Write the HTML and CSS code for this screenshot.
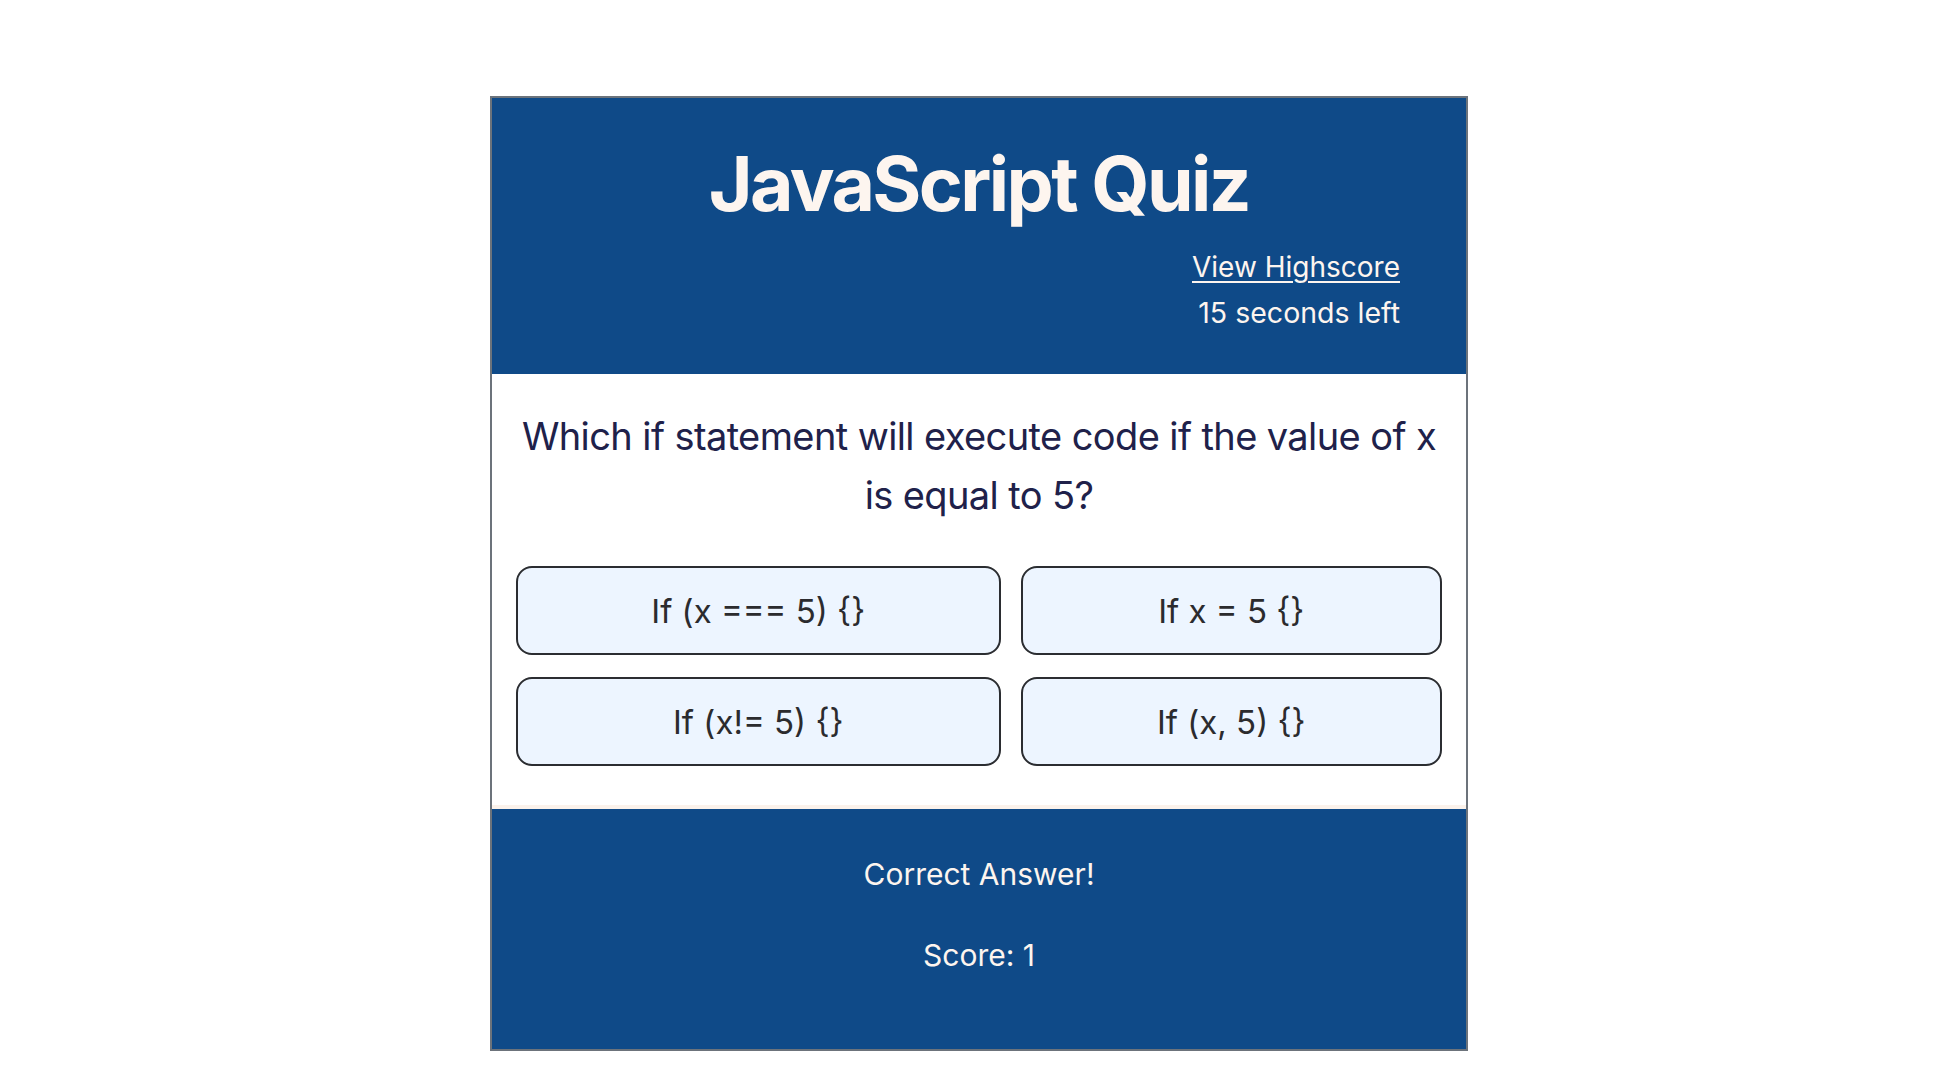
FILE: index.html
```html
<!DOCTYPE html>
<html lang="en">
<head>
<meta charset="utf-8">
<title>JavaScript Quiz</title>
<link rel="stylesheet" href="styles.css">
</head>
<body>
<div class="page">
  <div class="card">
    <header class="header">
      <h1 class="title">JavaScript Quiz</h1>
      <div class="meta">
        <a class="highscore" href="#">View Highscore</a>
        <div class="timer">15 seconds left</div>
      </div>
    </header>
    <main class="quiz">
      <p class="question">Which if statement will execute code if the value of x is equal to 5?</p>
      <div class="answers">
        <button class="answer">If (x === 5) {}</button>
        <button class="answer">If x = 5 {}</button>
        <button class="answer">If (x!= 5) {}</button>
        <button class="answer">If (x, 5) {}</button>
      </div>
    </main>
    <footer class="footer">
      <div class="result">Correct Answer!</div>
      <div class="score">Score: 1</div>
    </footer>
  </div>
</div>
</body>
</html>
```
FILE: styles.css
```css
* { box-sizing: border-box; }
html, body { margin: 0; padding: 0; background: #ffffff; }
body { font-family: Inter, "Noto Sans", "Liberation Sans", sans-serif; }
.page {
  display: flex;
  justify-content: center;
  padding: 96px 0 0 2px;
}
.card {
  width: 978px;
  border: 2px solid #6c737b;
  display: flex;
  flex-direction: column;
}
.header {
  background: #0f4a88;
  color: #fdf5ef;
  padding: 38px 24px 38px 24px;
}
.title {
  margin: 0;
  text-align: center;
  font-size: 75px;
  line-height: 96px;
  font-weight: 700;
  letter-spacing: -2.6px;
}
.meta {
  margin-top: 12px;
  padding-right: 42px;
  display: flex;
  flex-direction: column;
  align-items: flex-end;
  font-size: 28px;
  line-height: 46px;
}
.highscore {
  color: #fdf5ef;
  text-decoration: underline;
  text-underline-offset: 4px;
  text-decoration-thickness: 2px;
}
.timer { color: #fdf5ef; font-size: 28.5px; }
.quiz {
  background: #ffffff;
  padding: 33px 24px 39px 24px;
}
.question {
  margin: 0 -4px;
  text-align: center;
  color: #20214a;
  font-size: 38px;
  line-height: 59px;
  letter-spacing: -0.6px;
}
.answers {
  margin-top: 41px;
  display: grid;
  grid-template-columns: 484fr 421fr;
  column-gap: 20px;
  row-gap: 22px;
}
.answer {
  height: 89px;
  background: #edf5ff;
  border: 2px solid #2b2d31;
  border-radius: 16px;
  font-family: Inter, "Noto Sans", "Liberation Sans", sans-serif;
  font-size: 33px;
  color: #2b2b2e;
  text-align: center;
  padding: 0;
}
.footer {
  background: #0f4a88;
  border-top: 4px solid #fbf2eb;
  color: #fdf5ef;
  text-align: center;
  font-size: 30px;
  line-height: 36px;
  padding: 47px 0 76px 0;
  display: flex;
  flex-direction: column;
  gap: 45px;
}
```
